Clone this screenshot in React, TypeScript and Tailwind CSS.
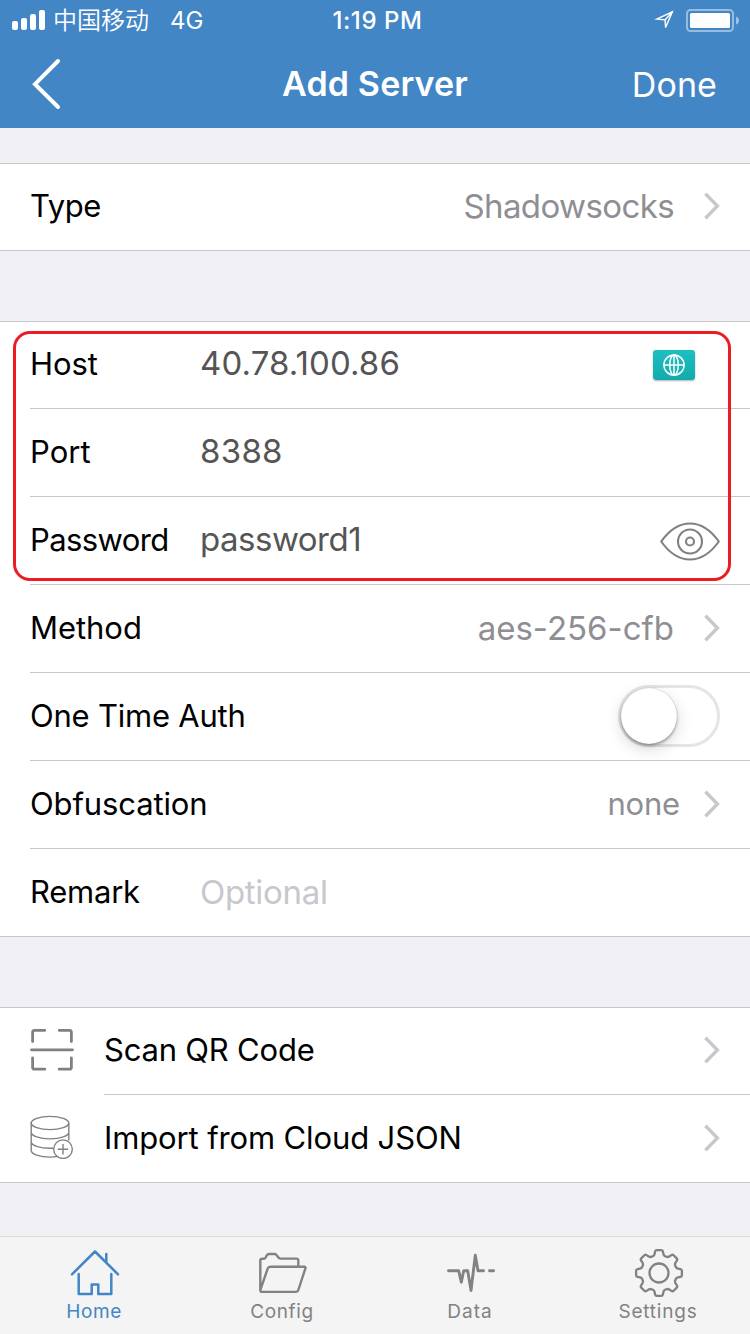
import type { ReactNode } from 'react';

function Chevron() {
  return (
    <svg className="block h-[28px] w-[16px] shrink-0" viewBox="0 0 16 28" fill="none" stroke="#c7c7cc" strokeWidth="3.4">
      <path d="M1.4 1.8 13.4 14 1.4 26.2" />
    </svg>
  );
}

function Signal() {
  return (
    <div className="flex h-5 items-end gap-[3px]">
      <span className="h-[9px] w-1.5 rounded-[2px] bg-white" />
      <span className="h-3 w-1.5 rounded-[2px] bg-white" />
      <span className="h-4 w-1.5 rounded-[2px] bg-white" />
      <span className="h-5 w-1.5 rounded-[2px] bg-white" />
    </div>
  );
}

function Header() {
  return (
    <header className="flex h-32 shrink-0 flex-col bg-[#4286c5] text-white">
      <div className="grid h-10 grid-cols-[1fr_auto_1fr] items-center pl-3 pr-[11px]">
        <div className="flex items-center">
          <Signal />
          <span className="ml-2 pb-0.5 text-[24px] font-[350] leading-[38px] font-['Noto_Sans_CJK_SC',sans-serif]">中国移动</span>
          <span className="ml-[21px] pt-0.5 text-[24px] font-[380] leading-[38px]">4G</span>
        </div>
        <span className="pl-[4px] pt-0.5 text-[24px] font-medium leading-[38px] tracking-[0.6px]">1:19 PM</span>
        <div className="flex items-center justify-end gap-3">
          <svg className="block h-[22px] w-5" viewBox="0 0 20 22" fill="none" stroke="#fff" strokeWidth="1.4">
            <path d="M18.300 2.800 2.800 10.100l8.300.8.500 7.700z" />
            <path d="M18.300 2.800 11.100 10.900" />
          </svg>
          <svg className="block h-[23px] w-[53px]" viewBox="0 0 53 23">
            <rect x="1" y="1" width="46" height="21" rx="3.5" fill="none" stroke="#fff" strokeOpacity="0.45" strokeWidth="2" />
            <rect x="4" y="4" width="40" height="15" rx="1.5" fill="#fff" />
            <path d="M50 7.5q3 1 3 4t-3 4z" fill="#fff" fillOpacity="0.5" />
          </svg>
        </div>
      </div>
      <div className="grid h-[88px] grid-cols-[1fr_auto_1fr] items-center pl-8 pr-[33px]">
        <svg className="block h-[52px] w-[29px]" viewBox="0 0 29 52" fill="none" stroke="#fff" strokeWidth="4" strokeLinecap="round">
          <path d="M26 3 3 26.2 26 49" />
        </svg>
        <h1 className="pl-px text-[34px] font-semibold leading-[88px] tracking-[0.15px]">Add Server</h1>
        <span className="pt-0.5 text-right text-[34px] font-[380] leading-[86px] tracking-[0.1px]">Done</span>
      </div>
    </header>
  );
}

function Group({ children, className = '' }: { children: ReactNode; className?: string }) {
  return <section className={`relative border-y border-[#c8c7cc] bg-white ${className}`}>{children}</section>;
}

type RowProps = {
  label: string;
  labelClass?: string;
  value?: string;
  valueClass?: string;
  first?: boolean;
  right?: ReactNode;
};

function Row({ label, labelClass = '', value, valueClass = '', first = false, right }: RowProps) {
  return (
    <div
      className={`ml-[30px] flex items-center pr-[30px] pb-0.5 ${first ? 'h-[86px]' : 'h-[88px] border-t border-[#c8c7cc]'}`}
    >
      <span className={`w-[170px] whitespace-nowrap text-[31px] leading-[40px] text-black ${labelClass}`}>{label}</span>
      <span className={`whitespace-nowrap text-[33px] leading-[40px] ${valueClass}`}>{value}</span>
      <div className="ml-auto flex items-center">{right}</div>
    </div>
  );
}

function Detail({ text, className }: { text: string; className: string }) {
  return (
    <>
      <span className={`whitespace-nowrap leading-[40px] text-[#8e8e93] ${className}`}>{text}</span>
      <Chevron />
    </>
  );
}

function GlobeBadge() {
  return (
    <div className="mr-[25px] mt-0.5 flex h-[30px] w-[42px] items-center justify-center rounded-[3px] bg-linear-to-b from-[#1dbfc1] to-[#12abad] shadow-[0_1px_2px_rgba(0,0,0,0.3)]">
      <svg className="block size-[22px]" viewBox="0 0 22 22" fill="none" stroke="#fff" strokeWidth="1.5">
        <circle cx="11" cy="11" r="10.1" />
        <ellipse cx="11" cy="11" rx="4.3" ry="10.1" />
        <path d="M1 11h20M11 1v20" />
      </svg>
    </div>
  );
}

function Eye() {
  return (
    <svg className="mt-0.5 block h-10 w-[60px]" viewBox="0 0 60 40" fill="none" stroke="#808080" strokeWidth="2.1">
      <path d="M1.200 20.500C9 9.500 18.500 2.500 30 2.500s21 7 28.800 18C51 31.500 41.500 38.500 30 38.500S9 31.500 1.200 20.500z" strokeLinejoin="round" />
      <circle cx="30" cy="20.500" r="12" />
      <circle cx="30" cy="20.500" r="4" />
    </svg>
  );
}

function Toggle() {
  return (
    <div className="flex h-[62px] w-[102px] items-center rounded-full border-[3px] border-[#e5e5e5] bg-white">
      <span className="size-[56px] rounded-full bg-white shadow-[0_0_1px_rgba(0,0,0,0.3),0_2px_3px_rgba(0,0,0,0.3),0_5px_16px_rgba(0,0,0,0.16)]" />
    </div>
  );
}

function ScanIcon() {
  return (
    <svg className="block size-11" viewBox="0 0 44 44" fill="none" stroke="#808080" strokeWidth="2.800" strokeLinecap="round">
      <path d="M2.600 13.500V4.300q0-2 2-2h10.200M29.200 2.300h10.200q2 0 2 2v9.200M2.600 30v9.200q0 2 2 2h10.200M29.200 41.200h10.200q2 0 2-2V30M1.500 21.800h41" />
    </svg>
  );
}

function DatabaseIcon() {
  return (
    <svg className="block size-11" viewBox="0 0 44 44" fill="none" stroke="#808080" strokeWidth="1.400">
      <ellipse cx="20" cy="8" rx="18.800" ry="6.600" />
      <path d="M1.200 8v27.500c0 3.600 8.400 6.600 18.800 6.600 3 0 5.800-.2 8.200-.7M38.800 8v17.500M1.200 17.300c0 3.600 8.400 6.600 18.800 6.600s18.800-3 18.800-6.600M1.200 26.700c0 3.600 8.400 6.600 18.800 6.600 1.500 0 2.800 0 4.200-.2" />
      <circle cx="33" cy="34.200" r="9.300" fill="#fff" />
      <path d="M33 29v10.400M27.800 34.200h10.400" />
    </svg>
  );
}

function ActionRow({ icon, label, first = false, className }: { icon: ReactNode; label: string; first?: boolean; className: string }) {
  return (
    <div className={`flex pl-[30px] ${first ? 'h-[86px]' : 'h-[88px]'}`}>
      <div className="flex w-[74px] items-center pb-0.5">{icon}</div>
      <div className={`flex flex-1 items-center justify-between pr-[30px] pb-0.5 ${first ? '' : 'border-t border-[#c8c7cc]'}`}>
        <span className={`text-[31px] leading-[40px] text-black ${className}`}>{label}</span>
        <Chevron />
      </div>
    </div>
  );
}

const polar = (angle: number, u: number, v: number) => {
  const x = 25 + u * Math.cos(angle) - v * Math.sin(angle);
  const y = 25 + u * Math.sin(angle) + v * Math.cos(angle);
  return `${x.toFixed(2)} ${y.toFixed(2)}`;
};

const gearPath =
  Array.from({ length: 8 }, (_, i) => {
    const a = (i * Math.PI) / 4;
    const p = (u: number, v: number) => polar(a, u, v);
    return [
      `${i === 0 ? 'M' : 'L'}${p(17, -5.6)}`,
      `Q${p(18, -4.6)} ${p(19, -4.4)}`,
      `L${p(21.4, -3.9)}`,
      `Q${p(22.9, -3.6)} ${p(22.9, -2.2)}`,
      `L${p(22.9, 2.2)}`,
      `Q${p(22.9, 3.6)} ${p(21.4, 3.9)}`,
      `L${p(19, 4.4)}`,
      `Q${p(18, 4.6)} ${p(17, 5.6)}`,
    ].join('');
  }).join('') + 'Z';

function TabIcon({ children, weight = 2.3 }: { children: ReactNode; weight?: number }) {
  return (
    <svg
      className="ml-0.5 block size-[50px]"
      viewBox="0 0 50 50"
      fill="none"
      stroke="currentColor"
      strokeWidth={weight}
      strokeLinecap="round"
      strokeLinejoin="round"
    >
      {children}
    </svg>
  );
}

function Tab({ icon, label, className, weight }: { icon: ReactNode; label: string; className: string; weight?: number }) {
  return (
    <div className={`flex w-[188px] shrink-0 flex-col items-center pt-[11px] ${className}`}>
      <TabIcon weight={weight}>{icon}</TabIcon>
      <span className="pt-px text-[19px] leading-[26px]">{label}</span>
    </div>
  );
}

function TabBar() {
  return (
    <nav className="flex h-[98px] shrink-0 overflow-hidden border-t border-[#dededf] bg-[#f4f4f4]">
      <Tab
        label="Home"
        weight={2.5}
        className="tracking-[0.6px] text-[#4286c5]"
        icon={<path d="M2 26.300 25 3.500l23 22.800M36.300 6v8.500M8.700 26v20h13V36.500h6.600v9.500h13V26" />}
      />
      <Tab
        label="Config"
        weight={2.4}
        className="tracking-[0.65px] text-[#828282]"
        icon={
          <path d="M2.300 42V12.500q0-1.700 1.700-1.700h1.500q1.500 0 2.300-1.600Q9.200 6 11 6h5.500q1.500 0 2.700 1.900 1.500 2.700 3.200 2.700h16q1.900 0 1.900 1.900v6M2.300 42l7.400-21.400q.7-1.900 2.500-1.900h34q1.700 0 1.200 1.600L40.500 41.500q-.8 2.400-2.800 2.400H4q-1.700 0-1.700-1.900z" />
        }
      />
      <Tab
        label="Data"
        weight={2.9}
        className="tracking-[1px] text-[#828282]"
        icon={<path d="M2.500 22.700h10.200l2.600 11.600 2.400-11.600h4L25 42.500l4.300-35.200L32 22.700h5.500M43.500 22.700H47.600" />}
      />
      <Tab
        label="Settings"
        className="tracking-[0.8px] text-[#828282]"
        icon={
          <>
            <path d={gearPath} />
            <circle cx="25" cy="25" r="9.500" />
          </>
        }
      />
    </nav>
  );
}

export default function App() {
  return (
    <div className="flex h-[1334px] w-[750px] flex-col overflow-hidden bg-[#efeff4] font-['Inter','Noto_Sans_CJK_SC',sans-serif]">
      <Header />
      <main className="flex flex-1 flex-col pt-[35px]">
        <Group>
          <Row first label="Type" labelClass="tracking-[-0.4px]" right={<Detail text="Shadowsocks" className="mr-[30px] text-[33px] tracking-[-0.6px]" />} />
        </Group>
        <Group className="mt-[70px]">
          <Row first label="Host" labelClass="tracking-[-0.1px]" value="40.78.100.86" valueClass="pb-0.5 text-[#555] tracking-[0.1px]" right={<GlobeBadge />} />
          <Row label="Port" value="8388" valueClass="pb-0.5 text-[#555] tracking-[0.3px]" />
          <Row label="Password" labelClass="tracking-[-0.6px]" value="password1" valueClass="pb-0.5 text-[#555] tracking-[-0.5px]" right={<Eye />} />
          <Row label="Method" labelClass="tracking-[-0.05px]" right={<Detail text="aes-256-cfb" className="mr-[30px] text-[33px]" />} />
          <Row label="One Time Auth" labelClass="tracking-[-0.22px]" right={<Toggle />} />
          <Row label="Obfuscation" labelClass="tracking-[-0.12px]" right={<Detail text="none" className="mr-6 text-[31px] tracking-[-0.2px]" />} />
          <Row label="Remark" labelClass="tracking-[-0.25px]" value="Optional" valueClass="text-[#c7c7cd] tracking-[-0.3px]" />
          <div className="pointer-events-none absolute left-[13px] top-[9px] h-[250px] w-[718px] rounded-[17px] border-[3px] border-[#ed1c24]" />
        </Group>
        <Group className="mt-[70px]">
          <ActionRow first icon={<ScanIcon />} label="Scan QR Code" className="tracking-[-0.2px]" />
          <ActionRow icon={<DatabaseIcon />} label="Import from Cloud JSON" className="tracking-[-0.13px]" />
        </Group>
      </main>
      <TabBar />
    </div>
  );
}
